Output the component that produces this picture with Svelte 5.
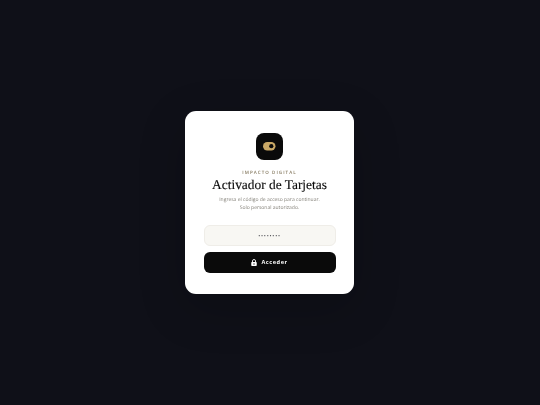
<script lang="ts">
	let code = $state('');
</script>

<main class="page">
	<div class="card">
		<div class="logo">
			<svg width="12.5" height="8.4" viewBox="0 0 12.5 8.4" aria-hidden="true">
				<rect x="0" y="0" width="12.5" height="8.4" rx="4.2" fill="#c9a866" />
				<circle cx="8.3" cy="4.2" r="2.1" fill="#0a0a0a" />
			</svg>
		</div>
		<p class="eyebrow">IMPACTO DIGITAL</p>
		<h1>Activador de Tarjetas</h1>
		<p class="sub">Ingresa el código de acceso para continuar.<br />Solo personal autorizado.</p>
		<form class="form" onsubmit={(e) => e.preventDefault()}>
			<input type="password" placeholder="••••••••" bind:value={code} />
			<button type="submit">
				<svg width="6" height="7" viewBox="0 0 12 14" aria-hidden="true">
					<path d="M3 7V4a3 3 0 0 1 6 0V7" fill="none" stroke="#fff" stroke-width="1.8" />
					<rect x="0.5" y="6" width="11" height="8" rx="1.4" fill="#fff" />
					<rect x="5.2" y="8.4" width="1.6" height="3.2" fill="#0a0a0a" />
				</svg>
				Acceder
			</button>
		</form>
	</div>
</main>

<style>
	:global(body) {
		margin: 0;
		background: #0f1018;
	}

	.page {
		min-height: 405px;
		padding-right: 1px;
		box-sizing: border-box;
		display: flex;
		align-items: center;
		justify-content: center;
		font-family: 'Open Sans', 'Liberation Sans', sans-serif;
		text-rendering: geometricPrecision;
	}

	.card {
		width: 169px;
		box-sizing: border-box;
		padding: 22px 18.5px 21.5px;
		background: #fff;
		border-radius: 11px;
		box-shadow: 0 14px 48px rgba(0, 0, 0, 0.2);
		display: flex;
		flex-direction: column;
		align-items: center;
		text-align: center;
		/* own layer: greyscale text like the reference */
		will-change: transform;
	}

	.logo {
		width: 27.5px;
		height: 27px;
		border-radius: 8px;
		background: #0a0a0a;
		display: flex;
		align-items: center;
		justify-content: center;
		margin-bottom: 10px;
	}

	.eyebrow {
		margin: 0 0 1px;
		font-size: 4.5px;
		font-weight: 600;
		line-height: 6px;
		letter-spacing: 1.05px;
		color: #85795f;
	}

	h1 {
		margin: 0 0 3px;
		font-family: 'Liberation Serif', serif;
		font-weight: 400;
		font-size: 13.4px;
		line-height: 16px;
		color: #0a0a0a;
		-webkit-text-stroke: 0.12px #0a0a0a;
	}

	.sub {
		margin: 0 0 13px;
		font-size: 5px;
		line-height: 8px;
		color: #85827a;
	}

	.form {
		width: 100%;
		display: flex;
		flex-direction: column;
		gap: 6px;
	}

	input {
		width: 100%;
		height: 21px;
		box-sizing: border-box;
		padding: 0 8px;
		border: 1px solid #efede8;
		border-radius: 6px;
		background: #f8f7f3;
		font-family: inherit;
		font-size: 5.5px;
		letter-spacing: 0.75px;
		text-align: center;
		outline: none;
	}

	input::placeholder {
		color: #55555a;
		opacity: 1;
	}

	button {
		height: 20.5px;
		border: none;
		border-radius: 6px;
		background: #0a0a0a;
		color: #fff;
		font-family: inherit;
		font-size: 5.6px;
		font-weight: 700;
		letter-spacing: 0.55px;
		display: flex;
		align-items: center;
		justify-content: center;
		gap: 4px;
		cursor: pointer;
	}
</style>
